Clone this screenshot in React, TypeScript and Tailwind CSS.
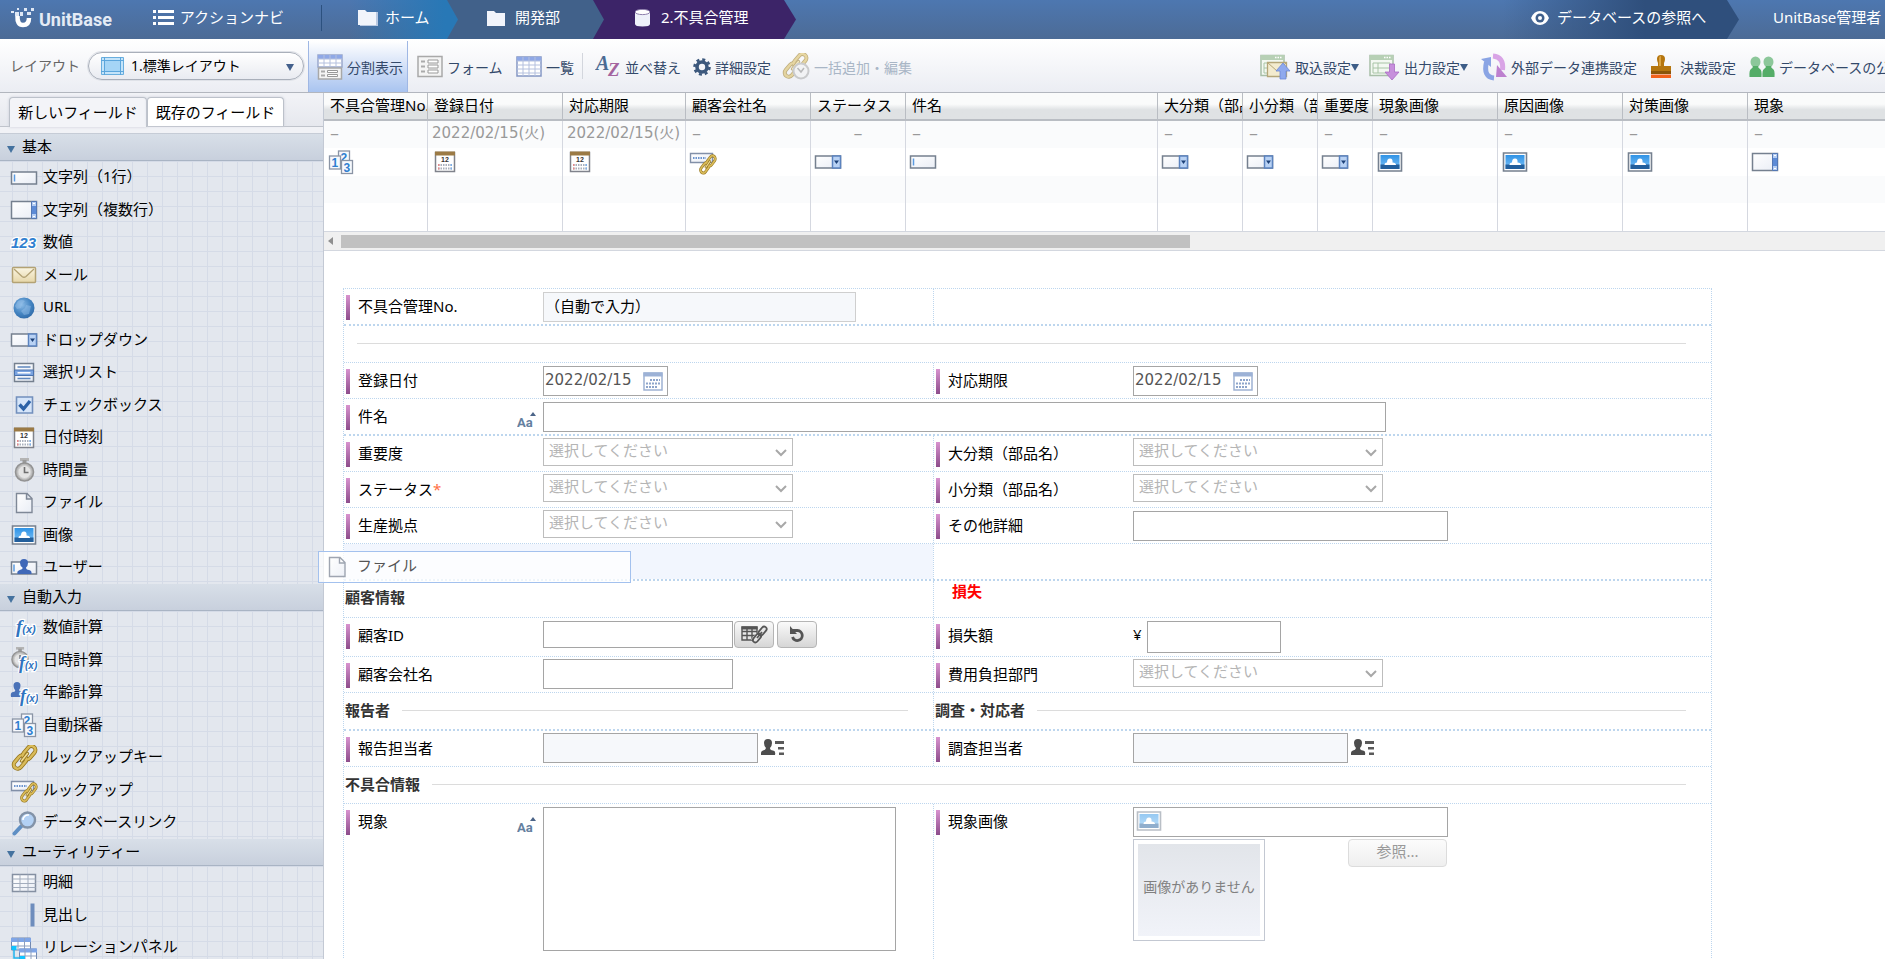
import { useState, type ReactNode } from 'react'
import clsx from 'clsx'

/* ---------- field type icons, all drawn on the same 28x26 box ---------- */

function IconBox({ children }: { children: ReactNode }) {
  return (
    <svg width="28" height="26" viewBox="0 0 28 26" fill="none" className="block shrink-0" aria-hidden="true">
      <defs>
        <linearGradient id="paper" x1="0" y1="0" x2="1" y2="1">
          <stop offset="0" stopColor="#ffffff" />
          <stop offset="1" stopColor="#e9edf5" />
        </linearGradient>
        <linearGradient id="sky" x1="0" y1="0" x2="0" y2="1">
          <stop offset="0" stopColor="#2f93e6" />
          <stop offset="1" stopColor="#7cc1f6" />
        </linearGradient>
        <radialGradient id="globe" cx="0.4" cy="0.35" r="0.7">
          <stop offset="0" stopColor="#8bbbe6" />
          <stop offset="0.6" stopColor="#4585c2" />
          <stop offset="1" stopColor="#2f6aa8" />
        </radialGradient>
        <linearGradient id="mail" x1="0" y1="0" x2="0" y2="1">
          <stop offset="0" stopColor="#fbf6e4" />
          <stop offset="1" stopColor="#e6d6a8" />
        </linearGradient>
      </defs>
      {children}
    </svg>
  )
}

const LINK_UPPER = { x: 12, y: 4.5, width: 15, height: 8, rx: 4, transform: 'rotate(-50 18.5 8.5)' }
const LINK_LOWER = { x: 2.5, y: 13, width: 15, height: 8, rx: 4, transform: 'rotate(-50 10 17)' }

function Chain() {
  return (
    <g strokeLinecap="round">
      <g stroke="#94741c" strokeWidth="4">
        <rect {...LINK_UPPER} />
        <rect {...LINK_LOWER} />
      </g>
      <g stroke="#d9bb5a" strokeWidth="2.400">
        <rect {...LINK_UPPER} />
        <rect {...LINK_LOWER} />
      </g>
      <path d="M11.500 16l6-7.500" stroke="#94741c" strokeWidth="3.400" />
      <path d="M11.500 16l6-7.500" stroke="#f0dc94" strokeWidth="1.600" />
    </g>
  )
}

function Fx({ x, y, size }: { x: number; y: number; size: number }) {
  return (
    <text
      x={x}
      y={y}
      fontFamily="Liberation Serif, serif"
      fontStyle="italic"
      fontWeight="bold"
      fontSize={size}
      fill="#2f74c0"
      stroke="#fff"
      strokeWidth="2.500"
      paintOrder="stroke"
    >
      f
      <tspan fontFamily="Liberation Sans, sans-serif" fontSize={size - 8}>
        (x)
      </tspan>
    </text>
  )
}

function Stopwatch() {
  return (
    <>
      <path d="M10 1h9v3h-9z" fill="#b4b4b4" />
      <path d="M12.500 3h4v4h-4z" fill="#9a9a9a" />
      <circle cx="14.500" cy="15" r="9" fill="#b9b9b9" stroke="#939393" strokeWidth="1.600" />
      <circle cx="14.500" cy="15" r="6.500" fill="#e4e4e4" stroke="#cfcfcf" />
      <path d="M14.500 10v5.500h4" stroke="#6f6f6f" strokeWidth="1.600" />
    </>
  )
}

const ICONS = {
  text: (
    <>
      <path d="M1.5 7h25v12h-25z" fill="url(#paper)" stroke="#75808f" strokeWidth="1.5" />
      <path d="M4.5 9.5v7" stroke="#5b9be0" strokeWidth="1.5" />
    </>
  ),
  textarea: (
    <>
      <path d="M1.5 4.5h25v17h-25z" fill="url(#paper)" stroke="#75808f" strokeWidth="1.5" />
      <path d="M21.500 4.500h5v17h-5z" fill="#b4cdf3" stroke="#5478b4" />
      <path d="M22 9h4v8h-4z" fill="#5d8bd6" />
      <path d="M23 6.500h2M23 19.500h2" stroke="#fff" />
    </>
  ),
  number: (
    <text x="1" y="18" fontFamily="Liberation Sans, sans-serif" fontStyle="italic" fontWeight="bold" fontSize="15" fill="#2f7fd0" stroke="#fff" strokeWidth="2.500" paintOrder="stroke">
      123
    </text>
  ),
  mail: (
    <>
      <rect x="2.5" y="5.5" width="23" height="15" rx="1" fill="url(#mail)" stroke="#b3a274" strokeWidth="1.5" />
      <path d="M4 7l8 7.5q2 1.500 4 0L24 7" stroke="#b3a274" strokeWidth="1.3" />
    </>
  ),
  url: (
    <>
      <circle cx="14" cy="13" r="10.5" fill="url(#globe)" />
      <path d="M8 6q4-2 7 0l-3 3-1 4-4 1-2-3zM16 10l5 1-2 8-5 1-3-4 4-3z" fill="#9cc4ea" opacity=".45" />
    </>
  ),
  dropdown: (
    <>
      <path d="M1.500 7h25v12h-25z" fill="url(#paper)" stroke="#75808f" strokeWidth="1.500" />
      <path d="M18.500 7h8v12h-8z" fill="#b9d2f4" stroke="#5b83bf" strokeWidth="1.500" />
      <path d="M20 11.500h5l-2.500 3.500z" fill="#1d4178" />
    </>
  ),
  list: (
    <>
      <path d="M4.500 3.500h19v18h-19z" fill="url(#paper)" stroke="#75808f" strokeWidth="1.500" />
      <path d="M4.500 10h19v5.500h-19z" fill="#7aa3e0" stroke="#4a72ae" />
      <path d="M7.500 7h13M7.500 18.500h13" stroke="#5f87bd" strokeWidth="1.500" />
      <path d="M7.500 12.800h13" stroke="#fff" strokeWidth="1.500" />
    </>
  ),
  check: (
    <>
      <path d="M6.500 5h16v16h-16z" fill="#d5e5fa" stroke="#7390bd" strokeWidth="1.600" />
      <path d="M9.500 12.500l4 4.500L20 9" stroke="#2c62a8" strokeWidth="3.400" />
    </>
  ),
  calendar: (
    <>
      <path d="M4.500 3.500h19v19h-19z" fill="#fff" stroke="#80838c" strokeWidth="1.500" />
      <path d="M4 2.500h20v4H4z" fill="#9b7a45" />
      <text x="10" y="13" fontFamily="Liberation Sans, sans-serif" fontWeight="bold" fontSize="7" fill="#333">
        12
      </text>
      <path d="M7 16h14M7 19.500h14" stroke="#aab1bd" strokeWidth="2" strokeDasharray="1.500 1" />
      <path d="M7 16h1.500M7 19.500h1.500" stroke="#e58a8a" strokeWidth="2" />
      <path d="M19.500 16h1.500M19.500 19.500h1.500" stroke="#7fb0e8" strokeWidth="2" />
    </>
  ),
  duration: <Stopwatch />,
  file: (
    <path d="M6.500 3.500h10.500l5 5v14h-15.500zM16.500 3.500v5.500h5.500" fill="url(#paper)" stroke="#7f8897" strokeWidth="1.400" />
  ),
  image: (
    <>
      <path d="M2.500 4h23v18h-23z" fill="#fff" stroke="#75808f" strokeWidth="1.600" />
      <path d="M4.500 6h19v14h-19z" fill="url(#sky)" />
      <path d="M4.500 15.500h19V20h-19z" fill="#235f9c" />
      <path d="M8.500 16q0-2.500 2.500-2.500 0-4 3-4t2.500 4q3.500 0 3.500 2.500z" fill="#fff" />
    </>
  ),
  user: (
    <>
      <path d="M1.500 7h25v12h-25z" fill="url(#paper)" stroke="#75808f" strokeWidth="1.500" />
      <path d="M4 9.500v7" stroke="#5b9be0" strokeWidth="1.500" />
      <path d="M14 4a4 4 0 0 1 4 4q0 3-2 4.500 0 2 3 2.500t2.500 4h-14q-1-3 2.300-4t2.700-2.500Q10 11 10 8a4 4 0 0 1 4-4z" fill="#3f68b8" />
    </>
  ),
  fx: <Fx x={6} y={18} size={19} />,
  dateFx: (
    <>
      <g transform="translate(-3 -1) scale(.9)">
        <Stopwatch />
      </g>
      <Fx x={9} y={22} size={18} />
    </>
  ),
  ageFx: (
    <>
      <path d="M7 2a3.500 3.500 0 0 1 3.500 3.500q0 3-1.500 4.500 0 1.500 3 2t2 5H1q-1-4.500 2-5t2-2Q3.500 8.500 3.500 5.500A3.500 3.500 0 0 1 7 2z" fill="#4a72b8" />
      <Fx x={10} y={22} size={18} />
    </>
  ),
  serial: (
    <>
      {[
        { x: 11.5, y: 2, n: '2' },
        { x: 2.5, y: 7, n: '1' },
        { x: 14.5, y: 11.5, n: '3' },
      ].map(({ x, y, n }) => (
        <g key={n}>
          <rect x={x} y={y} width="11" height="13" fill="#f7f9fd" stroke="#8a94a5" strokeWidth="1.300" />
          <text x={x + 2} y={y + 11} fontFamily="Liberation Sans, sans-serif" fontWeight="bold" fontSize="12" fill="#2f7fd0">
            {n}
          </text>
        </g>
      ))}
    </>
  ),
  lookupKey: <Chain />,
  lookup: (
    <>
      <path d="M1.500 4.500h22v9h-22z" fill="url(#paper)" stroke="#8290a8" strokeWidth="1.400" />
      <path d="M4 9h13" stroke="#3f74c0" strokeWidth="1.500" strokeDasharray="1.500 1" />
      <g transform="translate(9 6) scale(.68 .76)">
        <Chain />
      </g>
    </>
  ),
  dbLink: (
    <>
      <path d="M11 16.500L4.500 23.500" stroke="#5f8fc4" strokeWidth="4" strokeLinecap="round" />
      <circle cx="17.500" cy="10" r="7.500" fill="#b3d1f4" stroke="#8393a8" strokeWidth="2.400" />
      <path d="M13 10a5 5 0 0 1 6-5" stroke="#fff" strokeWidth="1.500" />
    </>
  ),
  detail: (
    <>
      <path d="M2.500 4.500h23v17h-23z" fill="url(#paper)" stroke="#8590a2" strokeWidth="1.500" />
      <path d="M2.500 9h23M2.500 13.500h23M2.500 17.500h23M10 4.500v17M18 4.500v17" stroke="#a3adbd" />
    </>
  ),
  heading: <path d="M20.500 1.500h4v23h-4z" fill="#6e8dbd" />,
  relation: (
    <>
      <path d="M1.500 3h19v12h-19z" fill="#fff" stroke="#6f87b0" />
      <path d="M1 3h20v4H1z" fill="#7fa5e6" />
      <path d="M1.500 11h19M8 3v12M14.500 3v12" stroke="#8da0c0" />
      <path d="M9.500 14h17v11h-17z" fill="#fff" stroke="#6f87b0" />
      <path d="M9 13.500h18v4H9z" fill="#7fa5e6" />
      <path d="M9.500 21h17M15 14v11M21 14v11" stroke="#8da0c0" />
      <path d="M4 14v9h7" stroke="#1fb4ee" strokeWidth="1.500" />
      <path d="M1.500 11h5v4h-5zM10 21h5v4h-5z" fill="#10c4ff" />
    </>
  ),
}

type IconName = keyof typeof ICONS

function FieldIcon({ name }: { name: IconName }) {
  return <IconBox>{ICONS[name]}</IconBox>
}

/* ---------- toolbar icons ---------- */

function TableShape({ y, h, color }: { y: number; h: number; color: string }) {
  return (
    <>
      <path d={`M1 ${y}h24v${h}h-24z`} fill="#fff" stroke={color} strokeWidth="1.500" />
      <path d={`M1 ${y}h24v4h-24z`} fill="#8fa8e6" />
      <path d={`M1 ${y + 4}h24M1 ${y + 8}h24M7 ${y}v${h}M13 ${y}v${h}M19 ${y}v${h}`} stroke="#b4c0de" />
    </>
  )
}

const SplitIcon = () => (
  <svg width="26" height="26" viewBox="0 0 26 26" fill="none" aria-hidden="true">
    <TableShape y={1} h={12} color="#9aa8cc" />
    <path d="M1.500 14h23v11h-23z" fill="#f4f4f4" stroke="#a8a8a8" strokeWidth="1.500" />
    <path d="M4 17.500h4M4 21.500h4" stroke="#aaa" strokeWidth="2" />
    <path d="M10.500 16.500h10v2h-10zM10.500 20.500h10v2h-10z" stroke="#999" fill="#fff" />
  </svg>
)

const FormIcon = () => (
  <svg width="26" height="26" viewBox="0 0 26 26" fill="none" aria-hidden="true">
    <path d="M1 2.500h24v20H1z" fill="#f4f4f4" stroke="#a9a9a9" strokeWidth="1.500" />
    <path d="M4 7.500h4M4 12.500h4M4 17.500h4" stroke="#aaa" strokeWidth="2" />
    <path d="M11 6h10v3H11zM11 11h10v3H11zM11 16h10v3H11z" stroke="#9a9a9a" fill="#fff" />
  </svg>
)

const ListIcon = () => (
  <svg width="26" height="26" viewBox="0 0 26 26" fill="none" aria-hidden="true">
    <TableShape y={3} h={19} color="#8496c4" />
    <path d="M1 15h24M1 19h24" stroke="#b4c0de" />
  </svg>
)

const SortIcon = () => (
  <svg width="26" height="26" viewBox="0 0 26 26" aria-hidden="true" fontFamily="Liberation Serif, serif" fontStyle="italic" fontWeight="bold">
    <text x="1" y="16" fontSize="20" fill="#4b6b93">A</text>
    <text x="13" y="22" fontSize="19" fill="#a4649f">Z</text>
  </svg>
)

const GearIcon = () => (
  <svg width="18" height="18" viewBox="0 0 18 18" fill="none" aria-hidden="true">
    <circle cx="9" cy="9" r="5" stroke="#3c587c" strokeWidth="3.600" />
    <circle cx="9" cy="9" r="7.500" stroke="#3c587c" strokeWidth="2.600" strokeDasharray="3 2.890" />
  </svg>
)

const BulkIcon = () => (
  <svg width="29" height="28" viewBox="0 0 29 28" fill="none" opacity=".55" aria-hidden="true">
    <Chain />
    <circle cx="20" cy="18" r="7.500" fill="#f2f2f2" stroke="#a9a9a9" strokeWidth="2" />
    <path d="M16.500 15l3.500 4 3-4" stroke="#888" strokeWidth="1.500" />
  </svg>
)

function SheetShape() {
  return (
    <>
      <path d="M1 2.500h23v20H1z" fill="#f3f8f2" stroke="#a8bfa8" strokeWidth="1.500" />
      <path d="M1 2h23v5H1z" fill="#b7d0b5" />
      <path d="M15 4.500h7" stroke="#fff" strokeWidth="1.500" strokeDasharray="1.500 1" />
      <path d="M4 10h17v10H4zM4 15h17M9 10v10" stroke="#a8c4a6" />
    </>
  )
}

const ImportIcon = () => (
  <svg width="31" height="28" viewBox="0 0 31 28" fill="none" aria-hidden="true">
    <SheetShape />
    <path d="M7.500 9.500h19v14h-19z" fill="#f3ebcf" stroke="#b5a679" strokeWidth="1.300" />
    <path d="M8 10l9 8 9-8" stroke="#b5a679" />
    <path d="M23 10l7 8h-4v8h-6v-8h-4z" fill="#8fa9ee" stroke="#6c88d6" strokeWidth=".8" />
  </svg>
)

const ExportIcon = () => (
  <svg width="31" height="28" viewBox="0 0 31 28" fill="none" aria-hidden="true">
    <SheetShape />
    <path d="M20.500 11h5v8h4.500l-7 8-7-8h4.500z" fill="#c78fdc" stroke="#a96bc4" strokeWidth=".8" />
  </svg>
)

const SyncIcon = () => (
  <svg width="26" height="28" viewBox="0 0 26 28" fill="none" aria-hidden="true">
    <path d="M13 25Q2 24 5.500 9" stroke="#8aa4e4" strokeWidth="5" />
    <path d="M0 6l10-2v10z" fill="#8aa4e4" />
    <path d="M12 3q11 1 9.500 14" stroke="#d9a4e6" strokeWidth="5" />
    <path d="M26 24l-11 0 1-12z" fill="#bd80cf" />
  </svg>
)

const StampIcon = () => (
  <svg width="22" height="24" viewBox="0 0 22 24" aria-hidden="true">
    <path d="M7 4q0-4 4-4t4 4q0 2-1 4v3h7v7H1v-7h7V8Q7 6 7 4z" fill="#b5760f" />
    <path d="M9 3q0-2 2-2v10H9z" fill="#dba545" />
    <path d="M1 16h20v3H1z" fill="#8a560a" />
    <path d="M1 19.500h20V23H1z" fill="#f2621c" />
  </svg>
)

const PeopleIcon = () => (
  <svg width="26" height="22" viewBox="0 0 26 22" aria-hidden="true">
    {[0, 13].map((dx) => (
      <g key={dx} transform={`translate(${dx} 0)`}>
        <ellipse cx="6.500" cy="6" rx="5" ry="5.500" fill="#8cc79a" />
        <path d="M4 10h5q0 2 2 3t1.500 8h-12Q0 14 2 13t2-3z" fill="#55ad68" />
      </g>
    ))}
  </svg>
)

const TriangleDown = ({ className }: { className?: string }) => (
  <svg width="8" height="7" viewBox="0 0 8 7" className={className} aria-hidden="true">
    <path d="M0 0h8L4 7z" fill="currentColor" />
  </svg>
)

/* ---------- header ---------- */

const Folder = () => <path d="M0 1h7l2 2h9v13H0z" fill="#f1f4fb" />

function Header() {
  return (
    <header className="flex h-[39px] shrink-0 items-stretch overflow-hidden bg-linear-to-b from-[#4d77b0] to-[#4c6b96] text-[15px] whitespace-nowrap text-white">
      <div className="flex w-[321px] shrink-0 items-center pb-1">
        <svg width="24" height="20" viewBox="0 0 24 20" fill="none" className="ml-[11px] shrink-0" aria-hidden="true">
          <path d="M6.500 8q-.5 9 5.500 9t6-7" stroke="#fff" strokeWidth="4.500" />
          <path d="M9 4h3v4H9zM16 4h4v3h-4zM20 0h3v3h-3zM4 4h4v4H4zM0 3h3v2H0zM13 0h3v3h-3zM6 0h2v2H6z" fill="#dfe8f5" />
        </svg>
        <span className="ml-1 pt-1 font-['Roboto',sans-serif] text-[18px] font-bold text-[#e4ebf5]">UnitBase</span>
        <a href="#navi" className="ml-auto mr-[37px] flex items-center gap-[6px]">
          <svg width="21" height="15" viewBox="0 0 21 15" aria-hidden="true">
            <path d="M0 0h3v3H0zM5 0h16v3H5zM0 6h3v3H0zM5 6h16v3H5zM0 12h3v3H0zM5 12h16v3H5z" fill="#fff" />
          </svg>
          アクションナビ
        </a>
      </div>
      <div className="mt-[5px] h-[26px] w-px shrink-0 bg-[#2c517f]" />
      <nav className="flex">
        <a
          href="#home"
          className="z-30 flex w-[136px] items-center gap-[7px] bg-linear-to-r from-transparent from-20% to-[#2878b6] to-90% pb-1 pl-9 [clip-path:polygon(0_0,calc(100%-11px)_0,100%_50%,calc(100%-11px)_100%,0_100%)]"
        >
          <svg width="20" height="17" viewBox="0 0 20 17" aria-hidden="true">
            <path d="M2 3h18v14H2z" fill="#b9c9e2" />
            <Folder />
          </svg>
          ホーム
        </a>
        <a
          href="#dept"
          className="z-20 -ml-3 flex w-[158px] items-center gap-[10px] bg-[#41618a] pb-1 pl-[41px] [clip-path:polygon(0_0,calc(100%-11px)_0,100%_50%,calc(100%-11px)_100%,0_100%)]"
        >
          <svg width="18" height="16" viewBox="0 0 18 16" aria-hidden="true">
            <Folder />
          </svg>
          開発部
        </a>
        <a
          href="#db"
          className="z-10 -ml-3 flex w-[204px] items-center gap-[11px] bg-[#3c2468] pb-1 pl-[43px] [clip-path:polygon(0_0,calc(100%-12px)_0,100%_50%,calc(100%-12px)_100%,0_100%)]"
        >
          <svg width="15" height="18" viewBox="0 0 15 18" aria-hidden="true">
            <path d="M0 3v12q0 2.500 7.500 2.500T15 15V3z" fill="#eef1fa" />
            <ellipse cx="7.500" cy="3" rx="7.500" ry="2.600" fill="#fff" stroke="#8f80ad" />
          </svg>
          2.不具合管理
        </a>
      </nav>
      <div className="ml-auto flex shrink-0">
        <a
          href="#view"
          className="flex w-[236px] items-center gap-[8px] bg-linear-to-r from-transparent to-[#2f4f7c] to-60% pb-1 pl-7 [clip-path:polygon(0_0,calc(100%-12px)_0,100%_50%,calc(100%-12px)_100%,0_100%)]"
        >
          <svg width="18" height="14" viewBox="0 0 18 14" aria-hidden="true">
            <path d="M0 7q3-7 9-7t9 7q-3 7-9 7T0 7z" fill="#fff" />
            <circle cx="9" cy="7" r="4.500" fill="#3f5f8b" />
            <circle cx="9" cy="7" r="2" fill="#fff" />
          </svg>
          データベースの参照へ
        </a>
        <span className="flex w-[146px] items-center pb-1 pl-[34px]">UnitBase管理者</span>
      </div>
    </header>
  )
}

/* ---------- toolbar ---------- */

interface ToolButtonProps {
  icon: ReactNode
  label: string
  active?: boolean
  disabled?: boolean
  menu?: boolean
  className?: string
}

function ToolButton({ icon, label, active, disabled, menu, className }: ToolButtonProps) {
  return (
    <button
      type="button"
      disabled={disabled}
      className={clsx(
        'flex shrink-0 items-center gap-1 pt-[3px]',
        disabled ? 'text-[#a9b6c6]' : 'text-[#33496a]',
        active && 'border-x border-[#9fb7e4] bg-linear-to-b from-white via-[#d3e0f7] to-[#a9c4f0]',
        className
      )}
    >
      {icon}
      <span>{label}</span>
      {menu && <TriangleDown className="-ml-1 text-[#3d5d88]" />}
    </button>
  )
}

function Toolbar() {
  const [layout, setLayout] = useState('1')

  return (
    <div className="flex h-[54px] shrink-0 items-stretch overflow-hidden border-b border-[#b2b6be] bg-linear-to-b from-white to-[#ebedf3] text-[14px] whitespace-nowrap">
      <label htmlFor="layout" className="w-[88px] shrink-0 self-center pl-[10px] text-[#666]">
        レイアウト
      </label>
      <div className="relative mr-1 w-[216px] shrink-0 self-center">
        <select
          id="layout"
          value={layout}
          onChange={(e) => setLayout(e.target.value)}
          className="h-7 w-full appearance-none rounded-full border border-[#a9afba] bg-linear-to-b from-white to-[#e9ebf1] pb-px pl-[42px] shadow-[0_0_0_1px_#dfe2e8] text-black"
        >
          <option value="1">1.標準レイアウト</option>
        </select>
        <svg width="23" height="18" viewBox="0 0 23 18" fill="none" className="pointer-events-none absolute top-[5px] left-[13px]" aria-hidden="true">
          <path d="M.5.500h22v17H.5z" fill="#c4e4fa" stroke="#69aede" />
          <path d="M4 4h15v10H4z" fill="#a5d5f6" />
          <path d="M3.500 0v18M19.500 0v18M0 3.500h23M0 14.500h23" stroke="#5ca6dc" />
        </svg>
        <TriangleDown className="pointer-events-none absolute top-[12px] right-[10px] text-[#43608c]" />
      </div>
      <ToolButton icon={<SplitIcon />} label="分割表示" active className="mt-[2px] w-[100px] pb-[2px] pl-[8px]" />
      <ToolButton icon={<FormIcon />} label="フォーム" className="ml-[9px] w-[90px]" />
      <ToolButton icon={<ListIcon />} label="一覧" className="ml-[9px]" />
      <div className="mx-2 h-[26px] w-px shrink-0 self-center bg-[#d3d6dd]" />
      <ToolButton icon={<SortIcon />} label="並べ替え" className="ml-1" />
      <ToolButton icon={<GearIcon />} label="詳細設定" className="ml-3" />
      <ToolButton icon={<BulkIcon />} label="一括追加・編集" disabled className="ml-[10px]" />
      <div className="ml-auto flex w-[625px] shrink-0 overflow-hidden">
        <ToolButton icon={<ImportIcon />} label="取込設定" menu />
        <ToolButton icon={<ExportIcon />} label="出力設定" menu className="ml-[10px]" />
        <ToolButton icon={<SyncIcon />} label="外部データ連携設定" className="ml-[13px]" />
        <ToolButton icon={<StampIcon />} label="決裁設定" className="ml-[13px] gap-[8px]" />
        <ToolButton icon={<PeopleIcon />} label="データベースの公開設定" className="ml-[13px]" />
      </div>
    </div>
  )
}

/* ---------- sidebar ---------- */

const SECTIONS: { title: string; items: { icon: IconName; label: string }[] }[] = [
  {
    title: '基本',
    items: [
      { icon: 'text', label: '文字列（1行）' },
      { icon: 'textarea', label: '文字列（複数行）' },
      { icon: 'number', label: '数値' },
      { icon: 'mail', label: 'メール' },
      { icon: 'url', label: 'URL' },
      { icon: 'dropdown', label: 'ドロップダウン' },
      { icon: 'list', label: '選択リスト' },
      { icon: 'check', label: 'チェックボックス' },
      { icon: 'calendar', label: '日付時刻' },
      { icon: 'duration', label: '時間量' },
      { icon: 'file', label: 'ファイル' },
      { icon: 'image', label: '画像' },
      { icon: 'user', label: 'ユーザー' },
    ],
  },
  {
    title: '自動入力',
    items: [
      { icon: 'fx', label: '数値計算' },
      { icon: 'dateFx', label: '日時計算' },
      { icon: 'ageFx', label: '年齢計算' },
      { icon: 'serial', label: '自動採番' },
      { icon: 'lookupKey', label: 'ルックアップキー' },
      { icon: 'lookup', label: 'ルックアップ' },
      { icon: 'dbLink', label: 'データベースリンク' },
    ],
  },
  {
    title: 'ユーティリティー',
    items: [
      { icon: 'detail', label: '明細' },
      { icon: 'heading', label: '見出し' },
      { icon: 'relation', label: 'リレーションパネル' },
    ],
  },
]

function Sidebar() {
  return (
    <aside className="flex w-[324px] shrink-0 flex-col overflow-hidden border-r border-[#c3c9d4] bg-[#e3e7ee] text-[15px] text-black">
      <div className="shrink-0 border-b border-[#c6ccd6] bg-[#f1f2f6] pt-1 pb-[6px]">
        <div className="flex h-[30px] items-stretch border-b border-[#c0c4cc] bg-linear-to-b from-[#f1f2f6] to-[#e6e8ee] pl-[9px]">
          <button type="button" className="-mb-px w-[138px] rounded-t-sm border border-b-0 border-[#bcc1ca] bg-[#f3f4f8] shadow-[0_0_3px_#c9cdd6]">
            新しいフィールド
          </button>
          <button type="button" className="w-[137px] rounded-t-sm border border-b-0 border-[#bcc1ca] bg-white shadow-[0_0_3px_#c9cdd6]">
            既存のフィールド
          </button>
        </div>
      </div>
      {SECTIONS.map((section) => (
        <section key={section.title} className="shrink-0">
          <h2 className="flex h-[27px] items-center gap-[7px] border-b border-[#a9b4c4] bg-linear-to-b from-[#d8dfe8] to-[#c8d0dd] pl-[7px]">
            <TriangleDown className="mt-1 text-[#44729f]" />
            <span className="pb-[2px]">{section.title}</span>
          </h2>
          <ul className="bg-[linear-gradient(to_right,transparent_12px,#d5dbe7_12px,#d5dbe7_13px,transparent_13px),linear-gradient(to_bottom,#d5dbe7_1px,transparent_1px)] bg-[size:15px_15px]">
            {section.items.map((item) => (
              <li key={item.label} className="flex h-8 items-center gap-[5px] pl-[10px] odd:h-[33px]">
                <FieldIcon name={item.icon} />
                <span className="pb-[2px]">{item.label}</span>
              </li>
            ))}
          </ul>
        </section>
      ))}
    </aside>
  )
}

/* ---------- record list ---------- */

const TODAY = '2022/02/15'

const COLUMNS: { label: string; width: string; icon: IconName; date?: boolean; center?: boolean }[] = [
  { label: '不具合管理No.', width: 'w-[104px]', icon: 'serial' },
  { label: '登録日付', width: 'w-[135px]', icon: 'calendar', date: true },
  { label: '対応期限', width: 'w-[123px]', icon: 'calendar', date: true },
  { label: '顧客会社名', width: 'w-[125px]', icon: 'lookup' },
  { label: 'ステータス', width: 'w-[95px]', icon: 'dropdown', center: true },
  { label: '件名', width: 'w-[252px]', icon: 'text' },
  { label: '大分類（部品名）', width: 'w-[85px]', icon: 'dropdown' },
  { label: '小分類（部品名）', width: 'w-[75px]', icon: 'dropdown' },
  { label: '重要度', width: 'w-[55px]', icon: 'dropdown' },
  { label: '現象画像', width: 'w-[125px]', icon: 'image' },
  { label: '原因画像', width: 'w-[125px]', icon: 'image' },
  { label: '対策画像', width: 'w-[125px]', icon: 'image' },
  { label: '現象', width: 'w-[252px]', icon: 'textarea' },
]

function RecordTable() {
  const cell = 'overflow-hidden border-r border-[#d5d8e0] p-0 whitespace-nowrap'

  return (
    <>
      <div className="overflow-hidden">
        <table className="w-[1676px] table-fixed border-separate border-spacing-0 text-[15px]">
          <thead>
            <tr className="h-7 bg-linear-to-b from-[#fafbfb] from-40% to-[#dfe2e4] to-60%">
              {COLUMNS.map((c) => (
                <th
                  key={c.label}
                  className={clsx(
                    c.width,
                    'overflow-hidden border-r border-b-2 border-[#b9bdc3] p-0 pb-[2px] pl-[6px] text-left leading-5 font-normal whitespace-nowrap text-black'
                  )}
                >
                  {c.label}
                </th>
              ))}
            </tr>
          </thead>
          <tbody className="text-[#999]">
            <tr className="h-[27px] bg-[#fafbfc] font-['DejaVu_Sans','Noto_Sans_CJK_JP',sans-serif] leading-5">
              {COLUMNS.map((c) => (
                <td key={c.label} className={clsx(cell, 'pb-[3px]', c.center ? 'text-center' : c.date ? 'pl-1' : 'pl-[6px]')}>
                  {c.date ? `${TODAY}(火)` : <span className="text-[18px]">–</span>}
                </td>
              ))}
            </tr>
            <tr className="h-7 bg-white">
              {COLUMNS.map((c) => (
                <td key={c.label} className={clsx(cell, 'pl-[3px]')}>
                  <FieldIcon name={c.icon} />
                </td>
              ))}
            </tr>
            <tr className="h-[27px] bg-[#fafbfc]">
              {COLUMNS.map((c) => (
                <td key={c.label} className={cell} />
              ))}
            </tr>
            <tr className="h-7 bg-white">
              {COLUMNS.map((c) => (
                <td key={c.label} className={cell} />
              ))}
            </tr>
          </tbody>
        </table>
      </div>
      <div className="flex h-5 items-center border-y border-[#d3d7df] bg-[#f0f0f0] pl-1">
        <svg width="6" height="8" viewBox="0 0 6 8" className="mr-[7px]" aria-hidden="true">
          <path d="M5 0v8L0 4z" fill="#8f8f8f" />
        </svg>
        <div className="h-[13px] w-[54.500%] bg-[#c1c1c1]" />
      </div>
    </>
  )
}

/* ---------- form ---------- */

function Row({ thick, className, children }: { thick?: boolean; className: string; children: ReactNode }) {
  return (
    <div className={clsx('flex border-dotted border-[#bdd6ee]', thick ? 'border-b-2' : 'border-b', className)}>
      {children}
    </div>
  )
}

function Left({ className, children }: { className?: string; children?: ReactNode }) {
  return <div className={clsx('flex w-[589px] shrink-0', className)}>{children}</div>
}

function Right({ children }: { children?: ReactNode }) {
  return <div className="flex min-w-0 flex-1 border-l border-dotted border-[#bdd6ee]">{children}</div>
}

interface FieldProps {
  id: string
  label: string
  required?: boolean
  upper?: boolean
  children: ReactNode
}

function Field({ id, label, required, upper, children }: FieldProps) {
  return (
    <div className="flex min-w-0 flex-1 items-start pl-[2px]">
      <div className="flex w-[197px] shrink-0 items-start">
        <span className="mt-[6px] h-[25px] w-1 bg-linear-to-b from-[#d893cf] to-[#8d4d8c]" />
        <label htmlFor={id} className="mt-[7px] ml-[8px] leading-5 text-black">
          {label}
          {required && <span className="text-[#ff7043]">*</span>}
        </label>
        {upper && (
          <svg width="20" height="16" viewBox="0 0 20 16" className="mt-3 mr-[6px] ml-auto" aria-hidden="true">
            <text x="0" y="16" fontFamily="Roboto, sans-serif" fontWeight="bold" fontSize="13" fill="#64809f">Aa</text>
            <path d="M13 5h6l-3-4z" fill="#4b6488" />
          </svg>
        )}
      </div>
      <div className="flex items-start pt-[3px]">{children}</div>
    </div>
  )
}

function TextBox({ id, className }: { id: string; className: string }) {
  return <input id={id} type="text" className={clsx('border border-[#a5a5a5] px-[2px]', className)} />
}

function Choice({ id }: { id: string }) {
  return (
    <div className="relative -mt-px w-[250px]">
      <select
        id={id}
        disabled
        className="h-7 w-full appearance-none border border-[#bdbdbd] bg-white pb-1 pl-[5px] text-[15px] text-[#b5b5b5] opacity-100"
      >
        <option>選択してください</option>
      </select>
      <svg width="12" height="8" viewBox="0 0 12 8" fill="none" className="pointer-events-none absolute top-[11px] right-[6px]" aria-hidden="true">
        <path d="M1 1l5 5 5-5" stroke="#a8a8a8" strokeWidth="2" />
      </svg>
    </div>
  )
}

function DateBox({ id }: { id: string }) {
  return (
    <div className="flex h-[30px] w-[125px] items-center border border-[#a5a5a5] bg-white">
      <input
        id={id}
        type="text"
        defaultValue={TODAY}
        className="w-[99px] pb-[2px] pl-px font-['DejaVu_Sans',sans-serif] text-[15px] text-[#555] outline-none"
      />
      <button type="button" aria-label="カレンダー">
        <svg width="20" height="19" viewBox="0 0 20 19" fill="none" aria-hidden="true">
          <path d="M1 1h18v17H1z" fill="#fff" stroke="#9fb2d3" strokeWidth="1.500" />
          <path d="M.5.500h19v4H.5z" fill="#9db2d6" />
          <path d="M7 8h10M3 11.500h14M3 15h11" stroke="#8ea5cb" strokeWidth="2" strokeDasharray="2 1" />
        </svg>
      </button>
    </div>
  )
}

function UserBox({ id }: { id: string }) {
  return (
    <>
      <input id={id} type="text" readOnly className="-mt-px h-[30px] w-[215px] border border-[#a5a5a5] bg-[#f6f8fb]" />
      <button type="button" aria-label="ユーザー選択" className="mt-[5px] ml-[3px]">
        <svg width="23" height="17" viewBox="0 0 23 17" aria-hidden="true">
          <path d="M7 0a4 4 0 0 1 4 4q0 3-2 5 0 2 3 2.500t2 4.500H0q-.5-4 2-4.500T5 9Q3 7 3 4a4 4 0 0 1 4-4z" fill="#4d4d4d" />
          <path d="M14 2h9v3h-9zM17 8h6v2.500h-6zM18 13.500h5V16h-5z" fill="#5a5a5a" />
        </svg>
      </button>
    </>
  )
}

function Heading({ children }: { children?: ReactNode }) {
  return (
    <div className="flex flex-1 items-center gap-3 pr-[25px] pb-[2px] pl-px">
      {children ? <h3 className="font-bold text-[#333]">{children}</h3> : <span />}
      <hr className="flex-1 border-[#dcdcdc]" />
    </div>
  )
}

function RecordForm() {
  const smallButton =
    'flex h-[27px] w-10 items-center justify-center rounded border border-[#b5b5b5] bg-linear-to-b from-[#fafafa] to-[#d6d6d6]'

  return (
    <form className="mt-[37px] mr-[173px] ml-[19px] border border-b-0 border-dotted border-[#bdd6ee] text-[15px]">
      <Row thick className="h-[37px]">
        <Left>
          <Field id="no" label="不具合管理No.">
            <input
              id="no"
              readOnly
              value="（自動で入力）"
              className="h-[30px] w-[313px] border border-[#cfcfcf] bg-[#f6f8fb] pb-1 pl-px text-black"
            />
          </Field>
        </Left>
        <Right />
      </Row>
      <Row className="h-[37px]">
        <Heading />
      </Row>
      <Row className="h-9">
        <Left>
          <Field id="created" label="登録日付">
            <DateBox id="created" />
          </Field>
        </Left>
        <Right>
          <Field id="due" label="対応期限">
            <DateBox id="due" />
          </Field>
        </Right>
      </Row>
      <Row thick className="h-[37px]">
        <Field id="subject" label="件名" upper>
          <TextBox id="subject" className="h-[30px] w-[843px]" />
        </Field>
      </Row>
      <Row className="h-9">
        <Left>
          <Field id="priority" label="重要度">
            <Choice id="priority" />
          </Field>
        </Left>
        <Right>
          <Field id="large" label="大分類（部品名）">
            <Choice id="large" />
          </Field>
        </Right>
      </Row>
      <Row className="h-9">
        <Left>
          <Field id="status" label="ステータス" required>
            <Choice id="status" />
          </Field>
        </Left>
        <Right>
          <Field id="small" label="小分類（部品名）">
            <Choice id="small" />
          </Field>
        </Right>
      </Row>
      <Row className="h-9">
        <Left>
          <Field id="site" label="生産拠点">
            <Choice id="site" />
          </Field>
        </Left>
        <Right>
          <Field id="other" label="その他詳細">
            <TextBox id="other" className="h-[30px] w-[315px]" />
          </Field>
        </Right>
      </Row>
      {/* Drop target with the field being dragged over it */}
      <Row thick className="h-[37px]">
        <Left className="relative bg-[#f2f6fe]">
          <div className="absolute top-[7px] -left-[26px] z-10 flex h-8 w-[313px] items-center gap-[6px] border border-[#a3c1ee] bg-white/75 pl-1">
            <span className="opacity-75">
              <FieldIcon name="file" />
            </span>
            <span className="pb-1 text-[#555]">ファイル</span>
          </div>
        </Left>
        <Right />
      </Row>
      <Row className="h-[37px]">
        <Left>
          <h3 className="pt-[5px] pl-px font-bold text-[#333]">顧客情報</h3>
        </Left>
        <Right>
          <h3 className="pl-[18px] leading-5 font-bold text-[#f00]">損失</h3>
        </Right>
      </Row>
      <Row className="h-[39px]">
        <Left>
          <Field id="customer" label="顧客ID">
            <TextBox id="customer" className="h-[27px] w-[190px]" />
            <button type="button" aria-label="参照" className={clsx(smallButton, 'ml-px')}>
              <svg width="27" height="20" viewBox="0 0 27 20" fill="none" aria-hidden="true">
                <path d="M1 2h15v13H1zM1 6.500h15M1 10.500h15M6 2v13M11 2v13" stroke="#555" strokeWidth="1.400" />
                <path d="M.5 1.500h16v3H.5z" fill="#555" />
                <path d="M13 17L25 4" stroke="#e6e6e6" strokeWidth="8" />
                <g stroke="#555" strokeWidth="1.800">
                  <rect x="16.500" y="3.500" width="10" height="5" rx="2.500" transform="rotate(-50 21.500 6)" />
                  <rect x="11" y="10.500" width="10" height="5" rx="2.500" transform="rotate(-50 16 13)" />
                  <path d="M16 13l5-6" />
                </g>
              </svg>
            </button>
            <button type="button" aria-label="リセット" className={clsx(smallButton, 'ml-[3px]')}>
              <svg width="18" height="17" viewBox="0 0 18 17" fill="none" aria-hidden="true">
                <path d="M4 4.500h5.500a5 5 0 1 1-5 6.500" stroke="#555" strokeWidth="2.800" />
                <path d="M2 0v8h7z" fill="#555" />
              </svg>
            </button>
          </Field>
        </Left>
        <Right>
          <Field id="loss" label="損失額">
            <span className="w-[14px] pt-[3px] leading-5 text-black">¥</span>
            <TextBox id="loss" className="h-8 w-[134px]" />
          </Field>
        </Right>
      </Row>
      <Row className="h-9">
        <Left>
          <Field id="company" label="顧客会社名">
            <TextBox id="company" className="-mt-px h-[30px] w-[190px]" />
          </Field>
        </Left>
        <Right>
          <Field id="cost" label="費用負担部門">
            <Choice id="cost" />
          </Field>
        </Right>
      </Row>
      <Row thick className="h-[38px]">
        <Left>
          <Heading>報告者</Heading>
        </Left>
        <Right>
          <Heading>調査・対応者</Heading>
        </Right>
      </Row>
      <Row className="h-9">
        <Left>
          <Field id="reporter" label="報告担当者">
            <UserBox id="reporter" />
          </Field>
        </Left>
        <Right>
          <Field id="researcher" label="調査担当者">
            <UserBox id="researcher" />
          </Field>
        </Right>
      </Row>
      <Row className="h-[37px]">
        <Heading>不具合情報</Heading>
      </Row>
      <Row className="h-[180px]">
        <Left>
          <Field id="detail" label="現象" upper>
            <textarea id="detail" className="h-36 w-[353px] resize-none border border-[#a5a5a5]" />
          </Field>
        </Left>
        <Right>
          <Field id="photo" label="現象画像">
            <div className="w-[315px]">
              <div className="relative">
                <TextBox id="photo" className="h-[30px] w-full pl-8" />
                <span className="pointer-events-none absolute top-px left-[2px] opacity-50">
                  <FieldIcon name="image" />
                </span>
              </div>
              <div className="mt-[2px] flex items-start justify-between pr-px">
                <div className="border border-[#c3c8d2] p-1">
                  <div className="flex h-[92px] w-[122px] items-center justify-center bg-linear-to-b from-[#e2e5ea] to-[#f1f3f9] pb-2 text-[14px] text-[#808080]">
                    画像がありません
                  </div>
                </div>
                <button
                  type="button"
                  disabled
                  className="h-7 w-[99px] rounded border border-[#dcdcdc] bg-linear-to-b from-[#fcfcfc] to-[#efefef] pb-1 text-[#999]"
                >
                  参照...
                </button>
              </div>
            </div>
          </Field>
        </Right>
      </Row>
    </form>
  )
}

export default function App() {
  return (
    <div className="flex h-screen flex-col overflow-hidden bg-white font-['Noto_Sans','Noto_Sans_CJK_JP',sans-serif]">
      <Header />
      <Toolbar />
      <div className="flex min-h-0 flex-1">
        <Sidebar />
        <main className="min-w-0 flex-1">
          <RecordTable />
          <RecordForm />
        </main>
      </div>
    </div>
  )
}
